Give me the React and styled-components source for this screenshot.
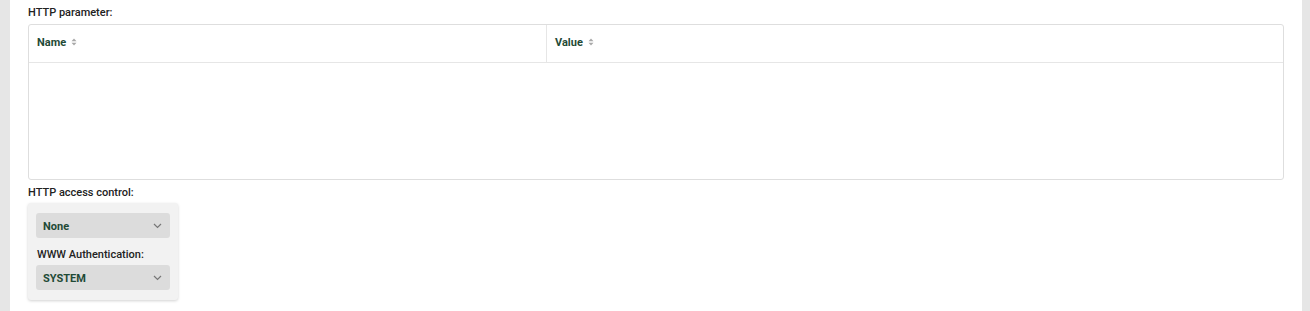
import React from "react";
import styled, { createGlobalStyle } from "styled-components";

const GlobalStyle = createGlobalStyle`
  body {
    margin: 0;
    background: #e6e6e6;
    font-family: Roboto, "Liberation Sans", Arial, sans-serif;
  }
`;

const Page = styled.div`
  display: flex;
  height: 311px;
  padding: 0 8px 0 10px;
`;

const Content = styled.div`
  flex: 1;
  background: #ffffff;
  padding: 5px 18px 0 18px;
`;

const Label = styled.div`
  font-size: 11px;
  font-weight: 500;
  line-height: 14px;
  padding-top: 1px;
  height: 14px;
  color: #222;
  margin: ${(p) => p.$margin || "0 0 4px"};
`;

const Table = styled.div`
  border: 1px solid #dedede;
  border-radius: 3px;
  height: 156px;
  box-sizing: border-box;
  margin-bottom: 5px;
`;

const HeadRow = styled.div`
  display: grid;
  grid-template-columns: 518px 1fr;
  height: 37px;
  border-bottom: 1px solid #e6e6e6;
`;

const HeadCell = styled.div`
  display: flex;
  align-items: center;
  gap: 5px;
  padding: 0 0 3px 8px;
  font-size: 11px;
  font-weight: 700;
  color: #1f4a36;
  border-right: ${(p) => (p.$divider ? "1px solid #e6e6e6" : "none")};
`;

const Panel = styled.div`
  width: 150px;
  box-sizing: border-box;
  background: #f2f2f2;
  border-radius: 3px;
  box-shadow: 0 1px 3px rgba(0, 0, 0, 0.18);
  padding: 10px 8px 10px;
`;

const Select = styled.div`
  display: flex;
  align-items: center;
  justify-content: space-between;
  height: 25px;
  box-sizing: border-box;
  padding: 2px 8px 0 7px;
  background: #dcdcdc;
  border-radius: 3px;
  font-size: 11px;
  font-weight: 700;
  color: #1f4a36;

  svg {
    margin-top: -2px;
  }
`;

const SortIcon = () => (
  <svg width="6" height="8" viewBox="0 0 6 8">
    <path d="M3 0.5 L5.5 3.2 H0.5 Z" fill="#a8a8a8" />
    <path d="M3 7.5 L5.5 4.8 H0.5 Z" fill="#a8a8a8" />
  </svg>
);

const Chevron = () => (
  <svg width="9" height="6" viewBox="0 0 9 6">
    <path d="M1 1 L4.5 4.5 L8 1" fill="none" stroke="#777" strokeWidth="1.2" />
  </svg>
);

export default function App() {
  return (
    <>
      <GlobalStyle />
      <Page>
        <Content>
          <Label $margin="0 0 4px">HTTP parameter:</Label>
          <Table>
            <HeadRow>
              <HeadCell $divider>
                Name <SortIcon />
              </HeadCell>
              <HeadCell>
                Value <SortIcon />
              </HeadCell>
            </HeadRow>
          </Table>
          <Label $margin="1px 0 3px">HTTP access control:</Label>
          <Panel>
            <Select>
              None <Chevron />
            </Select>
            <Label $margin="9px 0 3px 1px">WWW Authentication:</Label>
            <Select>
              SYSTEM <Chevron />
            </Select>
          </Panel>
        </Content>
      </Page>
    </>
  );
}
